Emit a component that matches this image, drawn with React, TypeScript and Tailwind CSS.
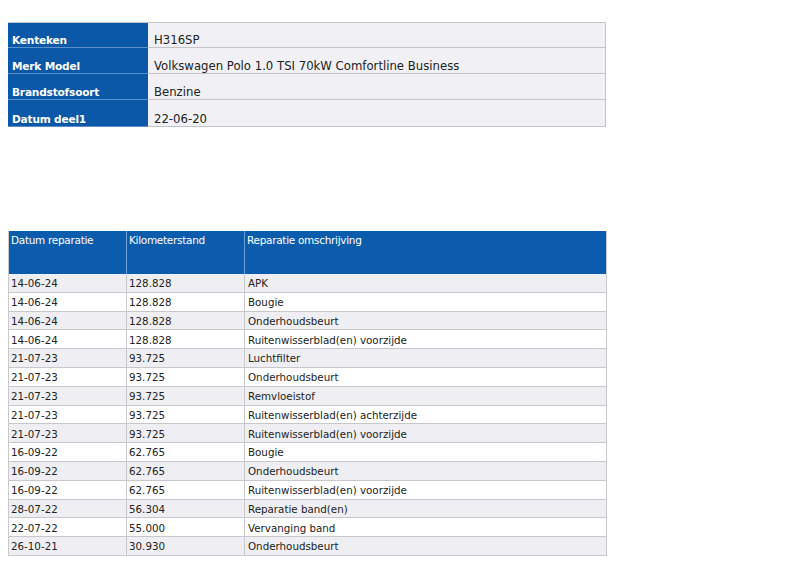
const vehicle = [
  { label: "Kenteken", value: "H316SP", h: "h-[25px]" },
  { label: "Merk Model", value: "Volkswagen Polo 1.0 TSI 70kW Comfortline Business", h: "h-[26px]" },
  { label: "Brandstofsoort", value: "Benzine", h: "h-[26px]" },
  { label: "Datum deel1", value: "22-06-20", h: "h-[27px]" },
];

const repairs = [
  ["14-06-24", "128.828", "APK"],
  ["14-06-24", "128.828", "Bougie"],
  ["14-06-24", "128.828", "Onderhoudsbeurt"],
  ["14-06-24", "128.828", "Ruitenwisserblad(en) voorzijde"],
  ["21-07-23", "93.725", "Luchtfilter"],
  ["21-07-23", "93.725", "Onderhoudsbeurt"],
  ["21-07-23", "93.725", "Remvloeistof"],
  ["21-07-23", "93.725", "Ruitenwisserblad(en) achterzijde"],
  ["21-07-23", "93.725", "Ruitenwisserblad(en) voorzijde"],
  ["16-09-22", "62.765", "Bougie"],
  ["16-09-22", "62.765", "Onderhoudsbeurt"],
  ["16-09-22", "62.765", "Ruitenwisserblad(en) voorzijde"],
  ["28-07-22", "56.304", "Reparatie band(en)"],
  ["22-07-22", "55.000", "Vervanging band"],
  ["26-10-21", "30.930", "Onderhoudsbeurt"],
];

export default function App() {
  return (
    <div className="w-[789px] h-[561px] bg-white overflow-hidden font-['DejaVu_Sans',sans-serif] text-[#222]">
      {/* voertuig gegevens */}
      <div className="ml-[8px] mt-[22px] w-[598px] border-t border-[#c9c9cd]">
        {vehicle.map((row) => (
          <div key={row.label} className={`grid grid-cols-[140px_1fr] ${row.h}`}>
            <div className="bg-[#0b58a8] border-b border-[#5d8fcb] flex items-end pb-[1px] pl-[4px] text-white font-bold text-[10.6px] tracking-[-0.2px] leading-[12px]">
              {row.label}
            </div>
            <div className="bg-[#f1f1f5] border-b border-r border-[#c4c4c8] flex items-end pb-[1px] pl-[6px] text-[11.7px] leading-[12px]">
              {row.value}
            </div>
          </div>
        ))}
      </div>

      {/* reparaties */}
      <div className="ml-[8px] mt-[104px] w-[599px] border-l border-r border-[#c9c9cd]">
        <div className="grid grid-cols-[118px_118px_1fr] h-[43px] bg-[#0b5cad] text-white text-[10.5px] tracking-[-0.3px]">
          <div className="pl-[2px] pt-[2px] border-r border-[#6c9fd9]">Datum reparatie</div>
          <div className="pl-[2px] pt-[2px] border-r border-[#6c9fd9]">Kilometerstand</div>
          <div className="pl-[2px] pt-[2px]">Reparatie omschrijving</div>
        </div>
        {repairs.map((r, i) => (
          <div
            key={i}
            className={`grid grid-cols-[118px_118px_1fr] h-[18.8px] border-b border-[#c8c8cc] text-[10.3px] ${
              i % 2 === 0 ? "bg-[#efeff3]" : "bg-white"
            }`}
          >
            <div className="pl-[2px] pt-[2px] flex items-center border-r border-[#c8c8cc]">{r[0]}</div>
            <div className="pl-[2px] pt-[2px] flex items-center border-r border-[#c8c8cc]">{r[1]}</div>
            <div className="pl-[3px] pt-[2px] flex items-center">{r[2]}</div>
          </div>
        ))}
      </div>
    </div>
  );
}
